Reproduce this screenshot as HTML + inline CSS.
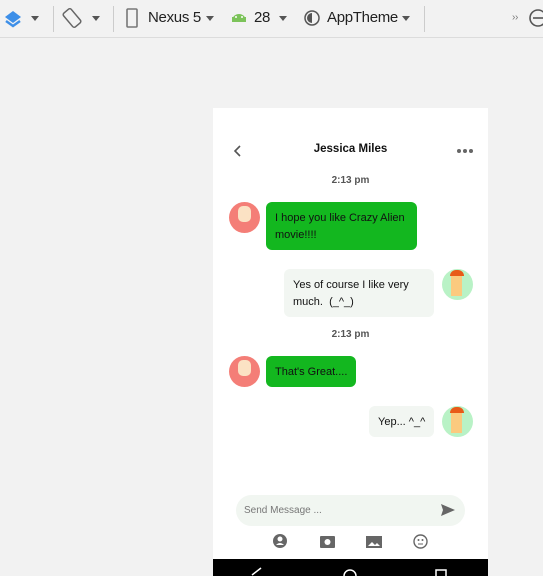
<!DOCTYPE html><html><head><style>
body{margin:0;width:543px;height:576px;background:#f2f2f2;font-family:"Liberation Sans",sans-serif;position:relative;overflow:hidden}
.tb{position:absolute;left:0;top:0;width:543px;height:37px;background:#f2f2f2;border-bottom:1px solid #dcdcdc}
.tb span{position:absolute;top:9px;font-size:15px;color:#222;letter-spacing:-0.3px}
.sep{position:absolute;top:6px;width:1px;height:26px;background:#ccc}
.ar{position:absolute;top:16px;width:0;height:0;border-left:4px solid transparent;border-right:4px solid transparent;border-top:5px solid #555}
.ph{position:absolute;left:213px;top:108px;width:275px;height:468px;background:#fff}
.t{position:absolute;font-size:11px;color:#111}
.b{position:absolute;font-size:11px;line-height:17px;padding:8px 9px 6px;border-radius:6px;color:#111}
.g{background:#13b71f}.w{background:#f2f6f2}
.av{position:absolute;width:31px;height:31px;border-radius:50%}
.ts{position:absolute;left:0;width:275px;text-align:center;font-size:10px;color:#555;font-weight:bold}
</style></head><body>
<div class="tb">
<svg style="position:absolute;left:3px;top:9px" width="20" height="20"><path d="M10 2 L18 8 L10 14 L2 8Z" fill="#3d8fe8"/><path d="M3 12 L10 17 L17 12" stroke="#3d8fe8" stroke-width="2.5" fill="none"/></svg>
<div class="ar" style="left:31px"></div><div class="sep" style="left:53px"></div>
<svg style="position:absolute;left:61px;top:7px" width="22" height="22"><rect x="6" y="2" width="10" height="18" rx="2" transform="rotate(-40 11 11)" stroke="#666" stroke-width="1.5" fill="none"/></svg>
<div class="ar" style="left:92px"></div><div class="sep" style="left:113px"></div>
<svg style="position:absolute;left:126px;top:8px" width="12" height="20"><rect x="1" y="1" width="10" height="18" rx="1" stroke="#777" stroke-width="1.6" fill="none"/></svg>
<span style="left:148px">Nexus 5</span><div class="ar" style="left:206px"></div>
<svg style="position:absolute;left:231px;top:11px" width="16" height="12"><path d="M1 10 A7 7 0 0 1 15 10Z" fill="#7cc35a"/><rect x="1" y="6" width="14" height="5" fill="#7cc35a"/><circle cx="5" cy="6" r="1" fill="#fff"/><circle cx="11" cy="6" r="1" fill="#fff"/></svg>
<span style="left:254px">28</span><div class="ar" style="left:279px"></div>
<svg style="position:absolute;left:303px;top:9px" width="18" height="18"><circle cx="9" cy="9" r="7" stroke="#555" stroke-width="1.5" fill="none"/><path d="M9 4 A5 5 0 0 0 9 14Z" fill="#555"/></svg>
<span style="left:327px">AppTheme</span><div class="ar" style="left:402px"></div><div class="sep" style="left:424px"></div>
<span style="left:512px;font-size:10px;top:12px;color:#777">››</span>
<svg style="position:absolute;left:528px;top:8px" width="20" height="20"><circle cx="10" cy="10" r="8" stroke="#555" stroke-width="1.6" fill="none"/><path d="M5 10h10" stroke="#555" stroke-width="1.6"/></svg>
</div>
<div class="ph">
<svg style="position:absolute;left:19px;top:36px" width="10" height="14"><path d="M8 2 L3 7 L8 12" stroke="#555" stroke-width="1.6" fill="none"/></svg>
<div class="t" style="left:0;width:275px;text-align:center;top:35px;font-weight:bold;font-size:11.5px">Jessica Miles</div>
<div style="position:absolute;left:243px;top:40px;font-size:0"><svg width="18" height="6"><circle cx="3" cy="3" r="2" fill="#666"/><circle cx="9" cy="3" r="2" fill="#666"/><circle cx="15" cy="3" r="2" fill="#666"/></svg></div>
<div class="ts" style="top:67px">2:13 pm</div>
<div class="av" style="left:16px;top:94px;background:#f47e77"></div><div style="position:absolute;left:25px;top:98px;width:13px;height:16px;background:#fbe2c4;border-radius:5px"></div>
<div class="b g" style="left:53px;top:94px;width:133px">I hope you like Crazy Alien movie!!!!</div>
<div class="b w" style="left:71px;top:161px;width:132px">Yes of course I like very much.&nbsp; (_^_)</div>
<div class="av" style="left:229px;top:161px;background:#b9f2c6"></div><div style="position:absolute;left:237px;top:162px;width:14px;height:6px;background:#e85a18;border-radius:6px 6px 0 0"></div><div style="position:absolute;left:238px;top:168px;width:11px;height:20px;background:#fbca7f"></div>
<div class="ts" style="top:221px">2:13 pm</div>
<div class="av" style="left:16px;top:248px;background:#f47e77"></div><div style="position:absolute;left:25px;top:252px;width:13px;height:16px;background:#fbe2c4;border-radius:5px"></div>
<div class="b g" style="left:53px;top:248px">That's Great....</div>
<div class="b w" style="left:156px;top:298px">Yep... ^_^</div>
<div class="av" style="left:229px;top:298px;background:#b9f2c6"></div><div style="position:absolute;left:237px;top:299px;width:14px;height:6px;background:#e85a18;border-radius:6px 6px 0 0"></div><div style="position:absolute;left:238px;top:305px;width:11px;height:20px;background:#fbca7f"></div>
<div style="position:absolute;left:23px;top:387px;width:229px;height:31px;border-radius:16px;background:#f1f6f1"></div>
<div style="position:absolute;left:31px;top:397px;font-size:10px;color:#777">Send Message ...</div>
<svg style="position:absolute;left:228px;top:396px" width="14" height="12"><path d="M0 0 L14 6 L0 12 L2 6Z" fill="#666"/></svg>
<svg style="position:absolute;left:60px;top:426px" width="14" height="14"><circle cx="7" cy="7" r="7" fill="#666"/><circle cx="7" cy="5" r="2.5" fill="#fff"/><path d="M3 11 Q7 7 11 11" fill="#fff"/></svg>
<svg style="position:absolute;left:107px;top:426px" width="15" height="14"><rect x="0" y="2" width="15" height="12" rx="1" fill="#666"/><circle cx="7.5" cy="8" r="3" fill="#fff"/></svg>
<svg style="position:absolute;left:153px;top:428px" width="16" height="12"><rect width="16" height="12" fill="#666"/><path d="M2 10 L6 6 L9 9 L11 7 L14 10Z" fill="#fff"/></svg>
<svg style="position:absolute;left:200px;top:426px" width="15" height="15"><circle cx="7.5" cy="7.5" r="6.5" stroke="#666" stroke-width="1.4" fill="none"/><circle cx="5.5" cy="6" r="1" fill="#666"/><circle cx="9.5" cy="6" r="1" fill="#666"/><path d="M5 10h5" stroke="#666"/></svg>
<div style="position:absolute;left:0;top:451px;width:275px;height:17px;background:#000"></div>
<svg style="position:absolute;left:36px;top:459px" width="14" height="9"><path d="M12 1 L3 8" stroke="#fff" stroke-width="1.5" fill="none"/></svg>
<svg style="position:absolute;left:129px;top:460px" width="16" height="8"><path d="M2 8 A6 6 0 0 1 14 8" stroke="#fff" stroke-width="1.5" fill="none"/></svg>
<svg style="position:absolute;left:222px;top:461px" width="12" height="7"><path d="M1 7 V1 H11 V7" stroke="#fff" stroke-width="1.5" fill="none"/></svg>
</div>
</body></html>
